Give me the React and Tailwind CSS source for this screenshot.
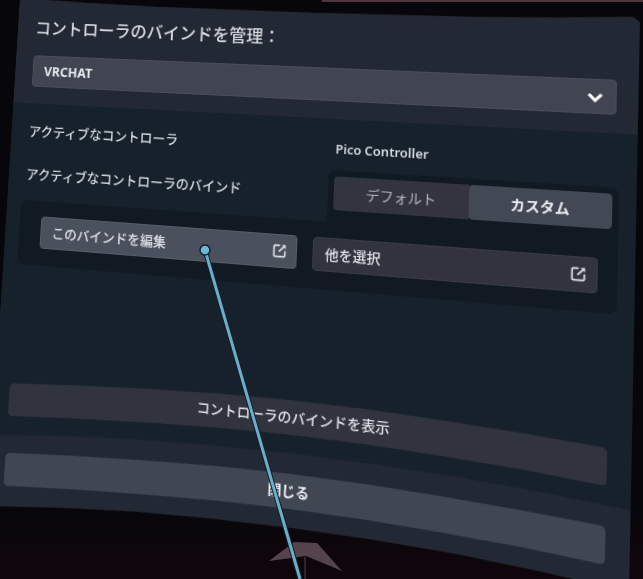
import React, { useState } from 'react';

// The overlay hangs in the room slightly turned away, so the whole panel shares one projection
const PANEL_PROJECTION =
    'origin-top-left [transform:matrix3d(0.85341,0.02661,0,-0.00017316,-0.05848,0.90826,0,-0.0000642,0,0,1,0,20,-2,0,1)]';

// The screen is curved: bars near the bottom arch upwards in the middle
const PANEL_CURVE =
    '[clip-path:polygon(0_0,12%_3px,25%_5px,50%_6px,75%_5px,88%_3px,99%_0,100%_5px,100%_100%,87.5%_calc(100%-8px),75%_calc(100%-14px),62.5%_calc(100%-17px),50%_calc(100%-18px),37.5%_calc(100%-17px),25%_calc(100%-14px),12.5%_calc(100%-8px),0_100%)]';
const FOOTER_CURVE =
    '[clip-path:polygon(0_16px,12.5%_9px,25%_4px,37.5%_1px,50%_0,62.5%_1px,75%_4px,87.5%_9px,100%_16px,100%_100%,0_100%)]';
const BAR_CURVE =
    '[clip-path:polygon(0_18px,1px_15px,4px_13px,12.5%_8px,25%_4px,37.5%_1px,50%_0,62.5%_1px,75%_4px,87.5%_8px,calc(100%-4px)_13px,calc(100%-1px)_15px,100%_18px,100%_44px,calc(100%-1px)_47px,calc(100%-4px)_48px,87.5%_42px,75%_38px,62.5%_35px,50%_34px,37.5%_35px,25%_38px,12.5%_42px,4px_47px,1px_46px,0_44px)]';

const OpenIcon = () => (
    <svg viewBox="0 0 16 16" className="h-3.5 w-3.5 shrink-0" fill="none" stroke="currentColor" strokeWidth="1.9" aria-hidden="true">
        <path d="M8.4 1.5H3Q1.5 1.5 1.5 3V13Q1.5 14.5 3 14.5H13Q14.5 14.5 14.5 13V7.6" />
        <path d="M7.2 8.8L13 3" />
        <path d="M10.4 0.8H15.2V5.6Z" fill="currentColor" stroke="none" />
    </svg>
);

const LinkButton = ({ label, tone }) => (
    <button type="button" className={`flex h-8.5 flex-1 items-center justify-between rounded-sm border pr-2.5 pl-3 text-sm font-medium ${tone}`}>
        <span>{label}</span>
        <OpenIcon />
    </button>
);

const BarButton = ({ label, tone }) => (
    <button type="button" className={`block h-12 w-full pb-3.5 text-center text-sm ${BAR_CURVE} ${tone}`}>
        {label}
    </button>
);

const App = () => {
    const [mode, setMode] = useState('custom');

    const segment = (id) =>
        mode === id ? 'bg-[#434855] font-bold text-[#eceef2]' : 'bg-[#32343f] text-[#b4b8c2]';

    return (
        <div className="relative min-h-screen overflow-hidden bg-linear-to-b from-[#07070b] from-88% to-[#0e060a] to-95% font-['Noto_Sans','Noto_Sans_CJK_JP',sans-serif]">
            <div className="absolute top-0 right-0 h-0.5 w-1/2 bg-[#50353c]" />

            <main className={`w-full bg-[#17212b] text-[#d5d9e0] ${PANEL_PROJECTION} ${PANEL_CURVE}`}>
                <header className="bg-[#232934] px-5 pt-4.5 pb-4.5">
                    <label htmlFor="app" className="mb-4 block text-lg leading-7 font-medium">
                        コントローラのバインドを管理：
                    </label>
                    <div className="relative">
                        <select
                            id="app"
                            className="block h-8.5 w-full appearance-none rounded-sm border border-[#4a4e5b] bg-[#414552] px-3 text-sm font-bold text-[#e6e8ec]"
                        >
                            <option>VRCHAT</option>
                        </select>
                        <svg viewBox="0 0 16 16" className="pointer-events-none absolute top-2.5 right-3 h-4 w-4 text-white" fill="none" stroke="currentColor" strokeWidth="3" aria-hidden="true">
                            <path d="M2 5L8 11L14 5" />
                        </svg>
                    </div>
                </header>

                <section className="px-4 pt-5 text-sm">
                    <div className="flex h-5 items-center font-medium">
                        <p className="flex-1 pl-1">アクティブなコントローラ</p>
                        <p className="w-[46%] pl-1.5 text-[13px] font-semibold">Pico Controller</p>
                    </div>
                    <div className="mt-3 flex">
                        <p className="flex-1 pt-3.5 pl-1 font-medium">アクティブなコントローラのバインド</p>
                        <div className="w-[46%] rounded-t-lg bg-[#111923] px-1.5 pt-1.5 pb-3">
                            <div className="flex h-8.5 overflow-hidden rounded-sm">
                                <button type="button" aria-pressed={mode === 'default'} onClick={() => setMode('default')} className={`flex-1 ${segment('default')}`}>
                                    デフォルト
                                </button>
                                <button type="button" aria-pressed={mode === 'custom'} onClick={() => setMode('custom')} className={`flex-1 rounded-sm ${segment('custom')}`}>
                                    カスタム
                                </button>
                            </div>
                        </div>
                    </div>
                    <div className="flex gap-4 rounded-lg rounded-tr-none bg-[#111923] pt-4 pr-4.5 pb-4.5 pl-6">
                        <LinkButton label="このバインドを編集" tone="border-[#555b67] bg-[#4a505c] text-[#dfe2e8]" />
                        <LinkButton label="他を選択" tone="border-[#393b46] bg-[#31333e] text-[#dfe2e8]" />
                    </div>
                </section>

                <div className="pt-28 pr-5.5 pb-1 pl-4">
                    <BarButton label="コントローラのバインドを表示" tone="bg-[#31333e] font-medium text-[#dfe2e8]" />
                </div>

                <footer className={`bg-[#232934] pt-5 pr-5.5 pb-5.5 pl-4 ${FOOTER_CURVE}`}>
                    <BarButton label="閉じる" tone="bg-[#404652] font-bold text-[#eceef2]" />
                </footer>
            </main>

            {/* Laser pointer and the controller tip below the panel */}
            <svg width="643" height="579" viewBox="0 0 643 579" className="pointer-events-none absolute top-0 left-0" aria-hidden="true">
                <path d="M269 561L294 542L317 543L342 571L306 556Z" fill="#55434b" />
                <path d="M305 557V579" stroke="#55434b" strokeWidth="1" />
                <path d="M205 250L300 579" stroke="#14202a" strokeWidth="5" />
                <path d="M205 250L300 579" stroke="#6aaecb" strokeWidth="3" />
                <circle cx="205" cy="250" r="5" fill="#6cb8d8" stroke="#13202b" strokeWidth="1.5" />
            </svg>
        </div>
    );
};

export default App;
